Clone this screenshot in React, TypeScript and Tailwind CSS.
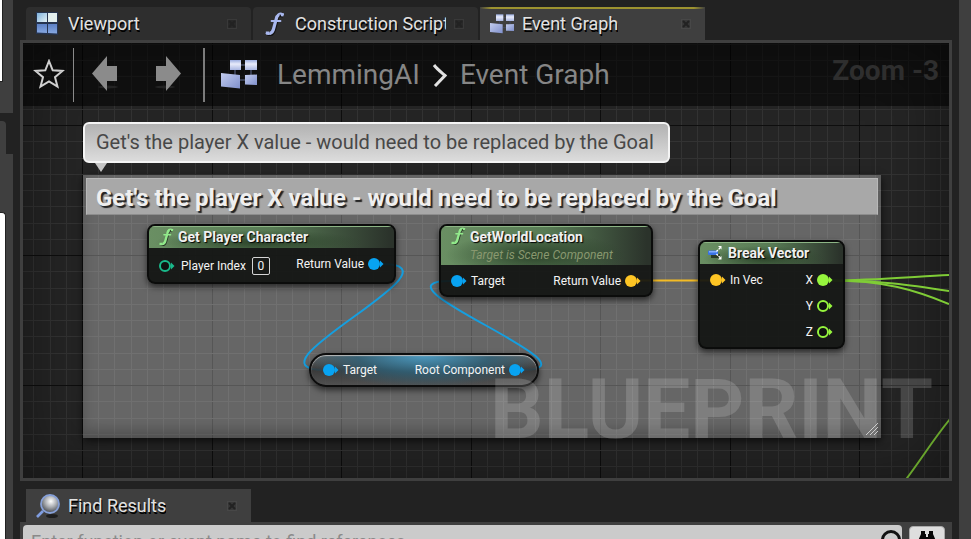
import React from "react";

const range = (from: number, count: number) => Array.from({ length: count }, (_, i) => from + i);
const CELL = 129.5 / 8;

function Grid() {
  return (
    <svg className="absolute inset-0 size-full" shapeRendering="crispEdges" aria-hidden="true">
      {range(-3, 120).map((n) => (
        <rect key={"v" + n} x={Math.round(59 + n * CELL)} y="0" width="1" height="100%" fill={n % 8 === 0 ? "#0e0e0e" : "#333333"} />
      ))}
      {range(-5, 80).map((n) => (
        <rect key={"h" + n} x="0" y={Math.round(82 + n * 16.25)} width="100%" height="1" fill={n % 8 === 0 ? "#0e0e0e" : "#333333"} />
      ))}
    </svg>
  );
}

function Wires() {
  return (
    <svg className="absolute left-0 top-0 size-full" viewBox="23 43 926 435" preserveAspectRatio="xMinYMin slice" fill="none" strokeWidth="2" aria-hidden="true">
      <path stroke="#159fe0" d="M382 264C472 264 235 370 325 370" />
      <path stroke="#159fe0" d="M522 370C610 370 362 281 450 281" />
      <path stroke="#f3bb25" d="M636 280.500H712" />
      <g stroke="#7fcc36">
        <path d="M830 280.500C870 280.500 910 277 949 275" />
        <path d="M830 280.500C880 280.500 910 285 949 291" />
        <path d="M830 280.500C885 280.500 915 290 949 304" />
        <path stroke="#68a42c" d="M904 482C921 460 932 441 950 419" />
      </g>
    </svg>
  );
}

function FunctionIcon({ className, color }: { className: string; color: string }) {
  return (
    <svg className={className} viewBox="0 0 20 24" fill="none" aria-hidden="true">
      <g transform="translate(1 1)" stroke="#000" strokeOpacity=".6" strokeLinecap="round">
        <path strokeWidth="3" d="M16 3C12 1 11.500 5 11 8L8.500 17C7.500 21 5.500 22.500 2 21" />
      </g>
      <path stroke={color} strokeWidth="3.200" d="M14 2.500C11.500 4 11.500 5 11 8L8.500 17C8 20 6.500 21 4.500 21.500" />
      <path stroke={color} strokeWidth="1.800" strokeLinecap="round" d="M18 2.500C16 1.200 14 1.500 13 3M6.500 20.500C5 22.500 3 22.300 1.500 21.500M6.500 9H15.500" />
      <path fill={color} d="M15.500 1.200H19L18.300 4.500 16 4.200ZM.8 19.500H4V22.500H1Z" />
    </svg>
  );
}

function GraphIcon({ className }: { className: string }) {
  return (
    <svg className={className} viewBox="0 0 36 29" aria-hidden="true">
      <defs>
        <linearGradient id="tile" x1="0" y1="0" x2="1" y2="1">
          <stop offset="0" stopColor="#c3cdef" />
          <stop offset="1" stopColor="#7f8fcb" />
        </linearGradient>
        <linearGradient id="tileLight" x1="0" y1="0" x2="0" y2="1">
          <stop offset="0" stopColor="#9caee0" />
          <stop offset="0.400" stopColor="#e8ebfa" />
          <stop offset="1" stopColor="#a9b6e2" />
        </linearGradient>
      </defs>
      <path stroke="#434b63" strokeWidth="1.500" fill="none" d="M14 10V15M20 5H24M30 10V15M19 20H24" />
      <rect x="9" y="0" width="11" height="10" fill="url(#tileLight)" />
      <rect x="24" y="0" width="12" height="10" fill="url(#tileLight)" />
      <path fill="url(#tile)" d="M0 13L19 15V28.500L0 26.500Z" />
      <path fill="url(#tile)" d="M24 15L36 14.500V25L24 24.500Z" />
    </svg>
  );
}

function ViewportIcon() {
  return (
    <svg className="size-6" viewBox="0 0 24 24" aria-hidden="true">
      <defs>
        <linearGradient id="pane" x1="0" y1="0" x2="0" y2="1">
          <stop offset="0" stopColor="#5c80c4" />
          <stop offset="1" stopColor="#86a7e0" />
        </linearGradient>
        <linearGradient id="paneLight" x1="0" y1="0" x2="1" y2="1">
          <stop offset="0" stopColor="#7fb2dc" />
          <stop offset="1" stopColor="#e4f1f4" />
        </linearGradient>
      </defs>
      <path fill="#26344f" d="M0 0H22V23L0 22Z" />
      <rect x="1" y="1" width="10" height="9" fill="url(#paneLight)" />
      <rect x="12" y="1" width="9" height="9" fill="#e3efee" />
      <path fill="url(#pane)" d="M1 12H11V21L1 20.500Z" />
      <path fill="url(#pane)" d="M12 12H21V21.500L12 21Z" />
    </svg>
  );
}

function LensIcon() {
  return (
    <svg className="size-6" viewBox="0 0 24 24" aria-hidden="true">
      <defs>
        <radialGradient id="lens" cx="0.550" cy="0.350" r="0.650">
          <stop offset="0" stopColor="#ffffff" />
          <stop offset="0.500" stopColor="#a8abb0" />
          <stop offset="1" stopColor="#46494f" />
        </radialGradient>
      </defs>
      <ellipse cx="16" cy="22" rx="6" ry="2" fill="#1e1e1e" />
      <path stroke="#7f9de0" strokeWidth="2.600" d="M1 23L7 17" />
      <circle cx="14" cy="10" r="9" fill="url(#lens)" stroke="#86a0d8" strokeWidth="1.800" />
    </svg>
  );
}

function BreakIcon() {
  return (
    <svg className="h-4 w-4" viewBox="0 0 16 16" aria-hidden="true">
      <rect x="3" y="9" width="9" height="4" fill="#0008" />
      <rect x="0" y="5.500" width="10" height="4.500" rx="1" fill="#3a73e6" />
      <rect x="1" y="6" width="8" height="1.500" fill="#82adff" />
      <path stroke="#fff" strokeWidth="1.400" fill="none" strokeDasharray="2 1" d="M8.500 6.500L12 3M8.500 9L12 12.500" />
      <path fill="#fff" d="M10 1H13.500V4.500ZM10 14.500H13.500V11Z" />
    </svg>
  );
}

function Tab({ title, icon, active, highlight }: { title: string; icon: React.ReactNode; active?: boolean; highlight?: boolean }) {
  return (
    <div className={"relative flex w-[225px] items-center pl-2.5 pr-3.5 " + (active ? "bg-[#3f3f3f]" : "rounded-t-sm bg-[#2e2e2e]")}>
      {highlight && <span className="absolute inset-x-0 top-0 h-0.5 bg-[linear-gradient(90deg,transparent,#b5a82c_5%,#b5a82c_95%,transparent)] opacity-80" />}
      <button role="tab" aria-selected={!!active} className="flex min-w-0 flex-1 items-center gap-2 text-left">
        <span className="shrink-0">{icon}</span>
        <span className="overflow-hidden whitespace-nowrap text-[18px] leading-6 text-[#e2e2e2] [text-shadow:1px_2px_0_#000]">{title}</span>
      </button>
      <button aria-label={"Close " + title} className="ml-2 flex size-2.5 shrink-0 items-center justify-center border border-[#ffffff14] bg-[#0000001a]">
        <svg className="size-2 shrink-0" viewBox="0 0 8 8" stroke="#222222" strokeWidth="2" aria-hidden="true">
          <path d="M1 1L7 7M7 1L1 7" />
        </svg>
      </button>
    </div>
  );
}

function Pin({ color, open }: { color: string; open?: boolean }) {
  return (
    <svg className="h-3.5 w-4 shrink-0" viewBox="0 0 16 14" aria-hidden="true">
      <circle cx="6" cy="7" r={open ? 5 : 6} fill={open ? "#101210" : color} stroke={open ? color : "none"} strokeWidth="2" />
      <path fill={color} d="M12 3.500L15.500 7 12 10.500Z" />
    </svg>
  );
}

const BLUE = "#08a3f2";
const YELLOW = "#fec524";
const GREEN = "#96f53d";
const node = "absolute overflow-hidden border-2 border-[#0b0c0b] bg-[#111411]/92 text-xs text-[#f4f4f4] shadow-[0_3px_6px_#0009]";
const nodeHead = "bg-[radial-gradient(ellipse_at_45%_75%,#2c432a_0%,transparent_55%),linear-gradient(90deg,#6a8f63_0%,#587b55_50%,#2b332b_98%)] shadow-[inset_0_1px_0_#8db585]";
const nodeTitle = "text-sm font-bold leading-5 text-[#f0f0f0] [text-shadow:1px_1px_1px_#000]";

function Nodes() {
  return (
    <>
      <article className={node + " left-[124px] top-[181px] w-[249px] rounded-lg"}>
        <header className={nodeHead + " flex h-[22px] items-center gap-1 pl-2.5"}>
          <FunctionIcon className="h-[18px] w-[15px]" color="#92ea8b" />
          <h3 className={nodeTitle}>Get Player Character</h3>
        </header>
        <div className="flex h-[34px] justify-between px-2.5 pt-px">
          <label className="flex items-center gap-1.5">
            <Pin color="#19b98a" open />
            <span>Player Index</span>
            <input defaultValue="0" className="h-[18px] w-[18px] rounded-[2px] border border-[#d5d5d5] bg-transparent text-center text-xs" />
          </label>
          <span className="flex h-[30px] items-center gap-1">Return Value<Pin color={BLUE} /></span>
        </div>
      </article>

      <article className={node + " left-[416px] top-[181px] w-[214px] rounded-lg"}>
        <header className={nodeHead + " flex h-[39px] items-start gap-1 pl-2.5 pt-px"}>
          <FunctionIcon className="h-[18px] w-[15px]" color="#92ea8b" />
          <div>
            <h3 className={nodeTitle}>GetWorldLocation</h3>
            <p className="italic text-[#89986f]">Target is Scene Component</p>
          </div>
        </header>
        <div className="flex h-[30px] justify-between px-2.5 pt-px">
          <span className="flex items-center gap-1"><Pin color={BLUE} />Target</span>
          <span className="flex items-center gap-1">Return Value<Pin color={YELLOW} /></span>
        </div>
      </article>

      <article className={node + " left-[675px] top-[197px] w-[147px] rounded-lg"}>
        <header className={nodeHead + " flex h-[22px] items-center gap-1 pl-2"}>
          <BreakIcon />
          <h3 className={nodeTitle}>Break Vector</h3>
        </header>
        <div className="flex h-[83px] items-start justify-between px-2.5 pt-[3px]">
          <span className="flex h-[26px] items-center gap-1"><Pin color={YELLOW} />In Vec</span>
          <ul className="flex flex-col">
            <li className="flex h-[26px] items-center justify-end gap-1">X<Pin color={GREEN} /></li>
            <li className="flex h-[26px] items-center justify-end gap-1">Y<Pin color={GREEN} open /></li>
            <li className="flex h-[26px] items-center justify-end gap-1">Z<Pin color={GREEN} open /></li>
          </ul>
        </div>
      </article>

      <article className="absolute left-[286px] top-[310px] flex h-[34px] w-[230px] items-center justify-between rounded-[17px] border-2 border-[#0d0d0d] bg-[radial-gradient(ellipse_at_50%_0%,#4aa3cfe0_0%,#2f6279d0_42%,transparent_75%),linear-gradient(#666e,#333333e0_50%,#4b4b4bcc)] px-3 text-xs text-[#f4f4f4] shadow-[0_3px_6px_#0009,inset_0_1px_1px_#bbb]">
        <span className="flex items-center gap-1"><Pin color={BLUE} />Target</span>
        <span className="flex items-center gap-1">Root Component<Pin color={BLUE} /></span>
      </article>
    </>
  );
}

function Comment() {
  return (
    <section className="absolute left-[60px] top-[132px] h-[263px] w-[798px] bg-white/30 p-[3px] shadow-[0_3px_8px_#000a,inset_0_-8px_12px_#0003]">
      <h2 className="h-[37px] whitespace-nowrap border border-[#b8b8b8] border-b-[#8d8d8d] bg-[#a8a8a8] pl-[9px] text-2xl font-bold leading-[38px] text-[#efefef] [text-shadow:2px_2px_1px_#222]">
        Get's the player X value - would need to be replaced by the Goal
      </h2>
      <svg className="absolute bottom-0.5 right-0.5 size-3.5" viewBox="0 0 14 14" stroke="#c4c4c4" aria-hidden="true">
        <path d="M1 13L13 1M5 13L13 5M9 13L13 9" />
      </svg>
    </section>
  );
}

function Bubble() {
  return (
    <div className="absolute left-[60px] top-[79px] h-[41px] w-[587px] whitespace-nowrap rounded-md border-2 border-[#f4f4f4] bg-linear-to-b from-[#b2b2b2] to-[#dcdcdc] pl-[11px] text-xl leading-9 text-[#484848]">
      Get's the player X value - would need to be replaced by the Goal
      <svg className="absolute -bottom-[11px] left-2.5 h-[9px] w-3" viewBox="0 0 12 9" aria-hidden="true">
        <path fill="#c4c4c4" d="M0 0H12L6 9Z" />
      </svg>
    </div>
  );
}

function Arrow({ flip }: { flip?: boolean }) {
  return (
    <svg className={"h-[38px] w-[26px] " + (flip ? "-scale-x-100" : "")} viewBox="0 0 26 38" aria-hidden="true">
      <ellipse cx="16" cy="31" rx="10" ry="1.500" fill="#242424" />
      <path fill="#8b8b8b" d="M0 17.500L15 0V10H25V25H15V35Z" />
    </svg>
  );
}

function Toolbar() {
  return (
    <div className="relative flex h-[63px] items-center bg-black/55">
      <button aria-label="Favorite" className="ml-2.5 w-[31px]">
        <svg className="size-8" viewBox="0 0 32 32" fill="none" stroke="#d0d0d0" strokeWidth="2" aria-hidden="true">
          <path d="M16 2L19.700 11.300 29.500 11.900 22 18.200 24.500 27.700 16 22.500 7.500 27.700 10 18.200 2.500 11.900 12.300 11.300Z" />
        </svg>
      </button>
      <span className="ml-[9px] h-[54px] w-px bg-[#8a8a8a]" />
      <button aria-label="Back" className="ml-[18px]"><Arrow /></button>
      <button aria-label="Forward" className="ml-[37px]"><Arrow flip /></button>
      <span className="ml-[22px] h-[54px] w-0.5 bg-[#7c7c7c]" />
      <nav aria-label="Breadcrumb" className="ml-4 flex flex-1 items-center text-[28px] leading-8 text-[#868686]">
        <GraphIcon className="h-[29px] w-9" />
        <button className="ml-5">LemmingAI</button>
        <svg className="ml-3 h-6 w-4" viewBox="0 0 16 24" fill="none" stroke="#e2e2e2" strokeWidth="3" aria-hidden="true">
          <path d="M2 2C5 6 9 9 13 12.500L3 23" />
        </svg>
        <button className="ml-3">Event Graph</button>
      </nav>
      <span className="mb-2 mr-2.5 text-[28px] font-bold leading-8 text-[#2e2e2e]">Zoom -3</span>
    </div>
  );
}

function SideStrip() {
  return (
    <aside className="flex w-[13px] shrink-0 flex-col">
      <div className="h-[113px] bg-[#3f3f3f]"><div className="h-[82px] w-[3px] border-b border-r border-[#222] bg-white" /></div>
      <div className="mt-2 h-[33px] w-1.5 rounded-tr-sm bg-[#3f3f3f]" />
      <div className="flex-1 bg-[#3f3f3f] pt-[58px]"><div className="h-full w-1.5 rounded-tr-sm border-r border-t border-[#222] bg-white" /></div>
    </aside>
  );
}

export default function App() {
  return (
    <div className="flex h-screen overflow-hidden bg-[#222222] font-[Roboto,'Liberation_Sans',sans-serif]">
      <SideStrip />
      <main className="mx-[7px] flex min-w-0 flex-1 flex-col">
        <div role="tablist" className="mt-[7px] flex h-[33px] shrink-0 gap-0.5 pl-1.5">
          <Tab title="Viewport" icon={<ViewportIcon />} />
          <Tab title="Construction Script" icon={<FunctionIcon className="h-6 w-6" color="#a9b8ee" />} />
          <Tab title="Event Graph" icon={<GraphIcon className="h-5 w-6" />} active highlight />
        </div>
        <section aria-label="Event Graph" className="relative min-h-0 flex-1 overflow-hidden border-[3px] border-[#3f3f3f] bg-[#252525]">
          <Grid />
          <div className="absolute inset-0 shadow-[inset_0_0_70px_#0007]" />
          <Toolbar />
          <Comment />
          <Wires />
          <Nodes />
          <Bubble />
          <span className="pointer-events-none absolute bottom-6 right-4 text-[84px] font-bold leading-[88px] text-white/16">BLUEPRINT</span>
        </section>

        <section className="mt-2 h-[50px] shrink-0 overflow-hidden">
          <div role="tablist" className="flex h-[33px] pl-1.5">
            <Tab title="Find Results" icon={<LensIcon />} active />
          </div>
          <div className="flex h-10 gap-[7px] bg-[#3f3f3f] pl-[3px] pr-[7px] pt-[3px]">
            <div className="relative flex-1">
              <input aria-label="Find in blueprint" placeholder="Enter function or event name to find references..." className="h-8 w-full rounded-sm bg-[#cbcbcb] pl-2 text-[18px] placeholder:text-[#8a8a8a]" />
              <svg className="absolute right-0 top-1 size-6" viewBox="0 0 24 24" fill="none" stroke="#111" strokeWidth="3" aria-hidden="true">
                <circle cx="13" cy="11" r="8.500" />
                <path d="M7 17L2 22" />
              </svg>
            </div>
            <button aria-label="Find in all blueprints" className="mt-px flex h-8 w-9 justify-center rounded-sm border border-[#aaa] bg-[#dedede] pt-1">
              <svg className="h-5 w-[18px]" viewBox="0 0 18 20" fill="#080808" aria-hidden="true">
                <path d="M3 0H7V3H8V6H10V3H11V0H15V3L18 10V18H11V10H7V18H0V10L3 3Z" />
              </svg>
            </button>
          </div>
        </section>
      </main>
      <aside className="w-3 shrink-0 bg-[#3f3f3f]" />
    </div>
  );
}
